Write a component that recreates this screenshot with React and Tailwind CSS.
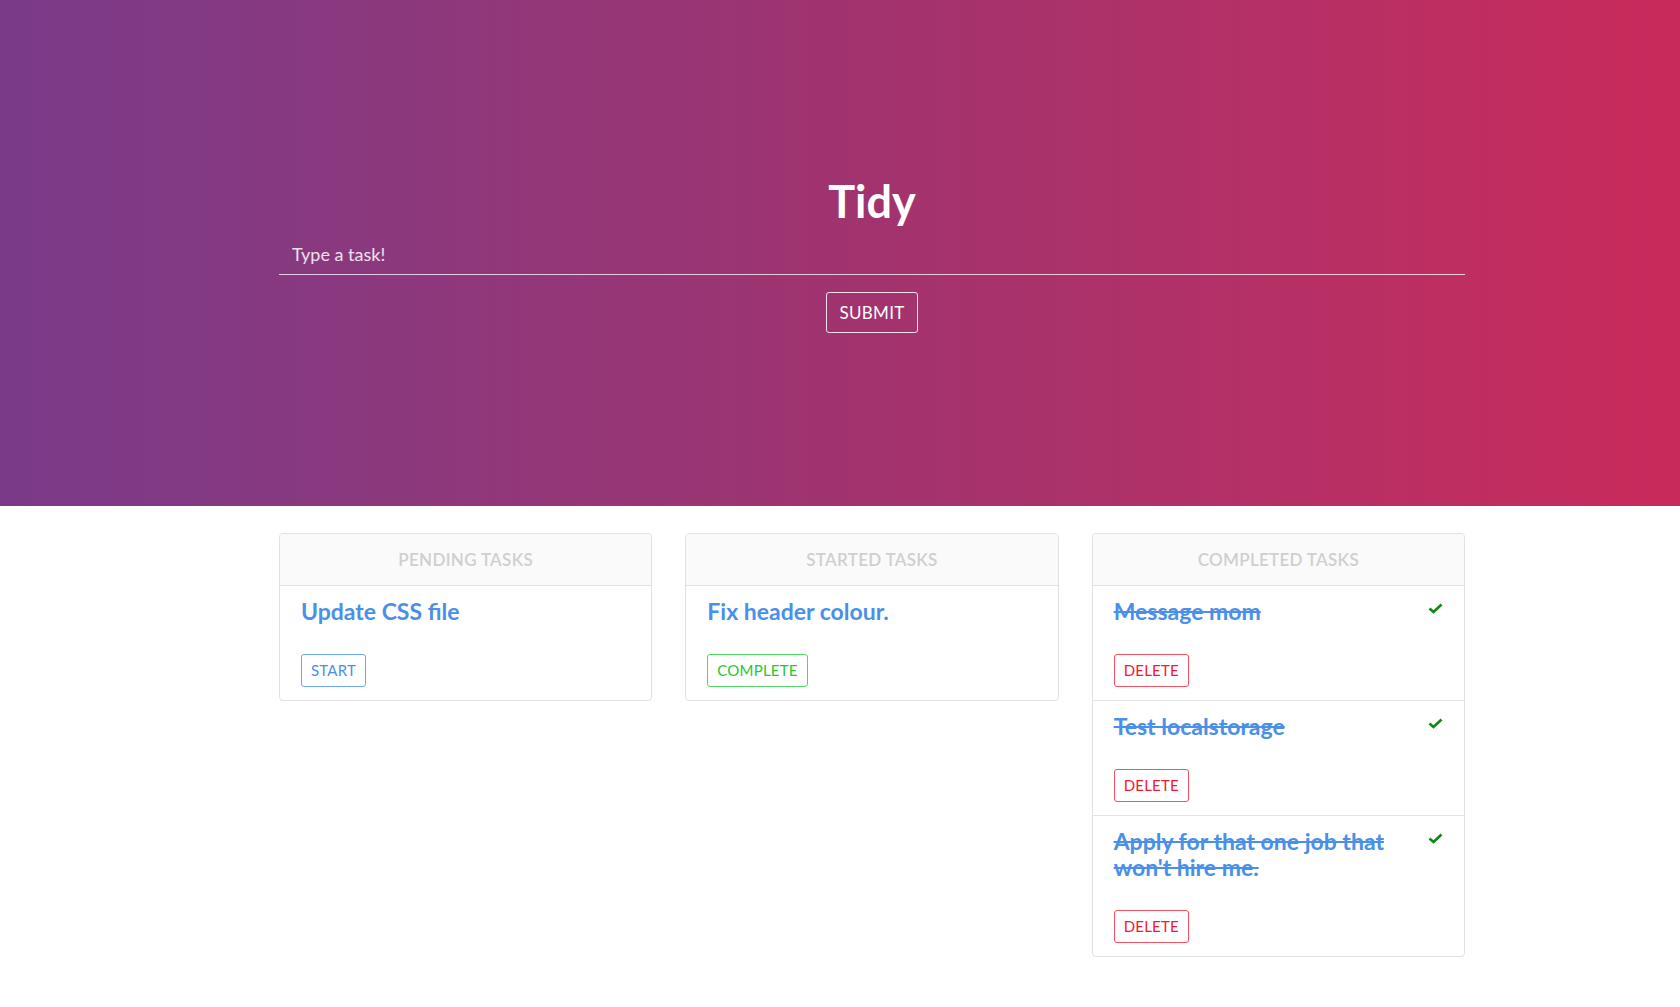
const pending = [{ id: 1, text: "Update CSS file" }];
const started = [{ id: 2, text: "Fix header colour." }];
const completed = [
  { id: 3, text: "Message mom" },
  { id: 4, text: "Test localstorage" },
  { id: 5, text: "Apply for that one job that won't hire me." },
];

const Check = () => (
  <svg width="15" height="11" viewBox="0 0 15 11" className="mt-[5px] shrink-0">
    <polyline
      points="1.5,5.5 5.5,9 13.5,1.5"
      fill="none"
      stroke="#0e8a12"
      strokeWidth="2.6"
    />
  </svg>
);

const TaskButton = ({ label, tone }) => {
  const tones = {
    blue: "text-[#4a8fe6] border-[#6ea6ee]",
    green: "text-[#1fc832] border-[#52d862]",
    red: "text-[#f3172f] border-[#f4505f]",
  };
  return (
    <button
      className={`h-[33px] px-[9px] border rounded-[3px] bg-white text-[15px] leading-none tracking-[0.2px] ${tones[tone]}`}
    >
      {label}
    </button>
  );
};

const Column = ({ title, children }) => {
  return (
    <div className="border border-[#e1e1e1] rounded-[4px] overflow-hidden bg-white self-start">
      <div className="h-[52px] border-b border-[#e1e1e1] bg-[#fafafa] flex items-center justify-center">
        <h2 className="text-[17px] font-semibold text-[#cfcfcf] tracking-[0.3px]">
          {title}
        </h2>
      </div>
      <div className="flex flex-col divide-y divide-[#e3e3e3]">{children}</div>
    </div>
  );
};

const TaskItem = ({ text, done, button, tone }) => {
  return (
    <div className="px-[21px] pt-[12px] pb-[13px]">
      <div className="flex justify-between items-start">
        <h3
          className={`text-[23px] leading-[26px] font-bold text-[#4a8fe8] max-w-[290px] ${
            done ? "line-through" : ""
          }`}
        >
          {text}
        </h3>
        {done && <Check />}
      </div>
      <div className="mt-[30px]">
        <TaskButton label={button} tone={tone} />
      </div>
    </div>
  );
};

const App = () => {
  return (
    <div className="min-h-screen bg-white font-['Lato','Open_Sans',sans-serif]">
      <header className="h-[506px] bg-gradient-to-r from-[#7a3a89] via-[#a0336f] to-[#c92a5b]">
        <div className="pl-[64px]">
          <div className="w-[1186px] mx-auto pt-[179px] flex flex-col items-center">
            <h1 className="text-[45px] leading-none font-bold text-white">
              Tidy
            </h1>
            <input
              type="text"
              placeholder="Type a task!"
              className="mt-[10px] w-full h-[41px] px-[13px] bg-transparent border-b border-white/75 text-[18px] text-white placeholder:text-white/85 outline-none"
            />
            <button className="mt-[17px] w-[92px] h-[41px] border border-white/85 rounded-[3px] text-white text-[17px] tracking-[0.3px]">
              SUBMIT
            </button>
          </div>
        </div>
      </header>

      <main className="pl-[64px] pt-[27px] pb-10">
        <div className="w-[1186px] mx-auto grid grid-cols-3 gap-[33px] items-start">
          <Column title="PENDING TASKS">
            {pending.map((t) => (
              <TaskItem key={t.id} text={t.text} button="START" tone="blue" />
            ))}
          </Column>
          <Column title="STARTED TASKS">
            {started.map((t) => (
              <TaskItem key={t.id} text={t.text} button="COMPLETE" tone="green" />
            ))}
          </Column>
          <Column title="COMPLETED TASKS">
            {completed.map((t) => (
              <TaskItem key={t.id} text={t.text} done button="DELETE" tone="red" />
            ))}
          </Column>
        </div>
      </main>
    </div>
  );
};

export default App;
